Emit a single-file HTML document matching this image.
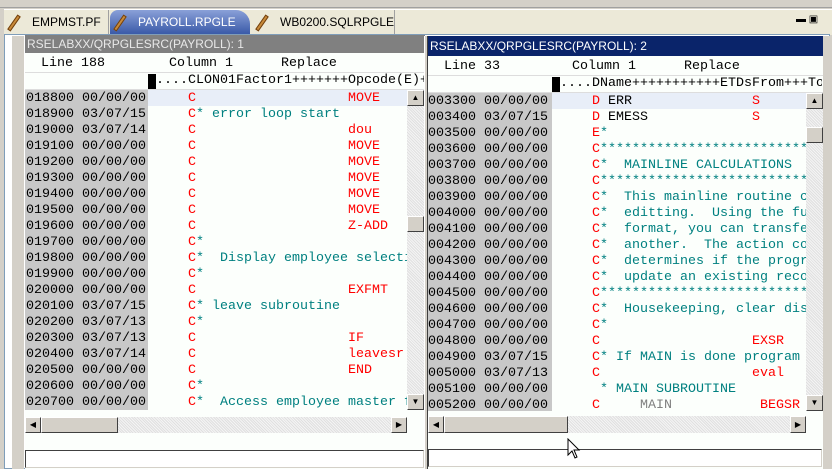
<!DOCTYPE html>
<html><head><meta charset="utf-8"><style>
*{margin:0;padding:0;box-sizing:border-box}
body{width:832px;height:469px;overflow:hidden;background:#d4d0c8;position:relative;font-family:"Liberation Sans",sans-serif}
.a{position:absolute}
.m{font-family:"Liberation Mono",monospace;font-size:13.33px;line-height:16px;white-space:pre}
.r{color:#f00}.t{color:#008080}.g{color:#808080}.k{color:#000}
.tab{position:absolute;top:10px;height:24px;font-size:12px;line-height:24px;color:#000;padding-left:28px}
.pen{position:absolute;left:8px;top:4px;width:4px;height:18px;background:#c88a3a;transform:rotate(35deg);border:1px solid #704010}
.hs{background:repeating-linear-gradient(45deg,#e0e0e0 0 1px,#f4f4f4 1px 2px)}
.btn{position:absolute;background:#d4d0c8;border:1px solid;border-color:#fff #404040 #404040 #fff}
</style></head><body>
<div class="a" style="left:0;top:0;width:832px;height:8px;background:#d4d0c8;border-bottom:1px solid #a0a0a0"></div>
<div class="a" style="left:4px;top:9px;width:828px;height:26px;background:#ece9d8;border-top:1px solid #fff"></div>
<div class="tab" style="left:4px;width:105px;border-right:1px solid #a0a0a0"><span class="pen"></span>EMPMST.PF</div>
<div class="tab" style="left:110px;width:140px;background:linear-gradient(#8aa0d8,#3a5aa8);color:#fff;border-radius:8px 14px 0 0"><span class="pen"></span>PAYROLL.RPGLE <b style="margin-left:6px">✕</b></div>
<div class="tab" style="left:252px;width:143px;border-right:1px solid #a0a0a0"><span class="pen"></span>WB0200.SQLRPGLE</div>
<div class="a" style="left:796px;top:14px;font-size:10px">▬ ▣</div>
<div class="a" style="left:4px;top:34px;width:826px;height:435px;background:#fff;border:1px solid #7f9db9"></div>
<div class="a" style="left:12px;top:36px;width:12px;height:433px;background:#d4d0c8"></div>

<!-- LEFT PANE -->
<div class="a" style="left:25px;top:36px;width:400px;height:433px;background:#fcfffc"></div>
<div class="a" style="left:25px;top:35px;width:400px;height:18px;background:#808080;color:#e8e8e8;font-size:12px;line-height:18px;padding-left:2px">RSELABXX/QRPGLESRC(PAYROLL): 1</div>
<div class="a m k" style="left:25px;top:56px">  Line 188        Column 1      Replace</div>
<div class="a" style="left:25px;top:72px;width:400px;height:1px;background:#ddd"></div>
<div class="a" style="left:148px;top:74px;width:8px;height:15px;background:#000"></div>
<div class="a m k" style="left:148px;top:73px">.....CLON01Factor1+++++++Opcode(E)+</div>
<div class="a" style="left:25px;top:89px;width:400px;height:1px;background:#ddd"></div>
<div class="a" style="left:25px;top:90px;width:123px;height:320px;background:#c8c8c8"></div>
<div class="a" style="left:148px;top:90px;width:259px;height:16px;background:#e8eef8"></div>
<div class="a m k" style="left:26px;top:91px">018800 00/00/00
018900 03/07/15
019000 03/07/14
019100 00/00/00
019200 00/00/00
019300 00/00/00
019400 00/00/00
019500 00/00/00
019600 00/00/00
019700 00/00/00
019800 00/00/00
019900 00/00/00
020000 00/00/00
020100 03/07/15
020200 03/07/13
020300 03/07/13
020400 03/07/14
020500 00/00/00
020600 00/00/00
020700 00/00/00</div>
<div class="a m" style="left:148px;top:91px;width:259px;overflow:hidden"><span class="r">     C                   MOVE</span>
<span class="r">     C</span><span class="t">* error loop start</span>
<span class="r">     C                   dou</span>
<span class="r">     C                   MOVE</span>
<span class="r">     C                   MOVE</span>
<span class="r">     C                   MOVE</span>
<span class="r">     C                   MOVE</span>
<span class="r">     C                   MOVE</span>
<span class="r">     C                   Z-ADD</span>
<span class="r">     C</span><span class="t">*</span>
<span class="r">     C</span><span class="t">*  Display employee selection</span>
<span class="r">     C</span><span class="t">*</span>
<span class="r">     C                   EXFMT</span>
<span class="r">     C</span><span class="t">* leave subroutine</span>
<span class="r">     C</span><span class="t">*</span>
<span class="r">     C                   IF</span>
<span class="r">     C                   leavesr</span>
<span class="r">     C                   END</span>
<span class="r">     C</span><span class="t">*</span>
<span class="r">     C</span><span class="t">*  Access employee master file</span></div>
<div class="a hs" style="left:407px;top:90px;width:17px;height:320px"></div>
<div class="btn" style="left:407px;top:90px;width:17px;height:16px;font-size:8px;text-align:center;line-height:14px">▲</div>
<div class="btn" style="left:407px;top:216px;width:17px;height:16px"></div>
<div class="btn" style="left:407px;top:394px;width:17px;height:16px;font-size:8px;text-align:center;line-height:14px">▼</div>
<div class="a hs" style="left:25px;top:417px;width:382px;height:16px"></div>
<div class="btn" style="left:25px;top:417px;width:16px;height:16px;font-size:8px;text-align:center;line-height:14px">◀</div>
<div class="btn" style="left:41px;top:417px;width:77px;height:16px"></div>
<div class="btn" style="left:391px;top:417px;width:16px;height:16px;font-size:8px;text-align:center;line-height:14px">▶</div>
<div class="a" style="left:25px;top:450px;width:399px;height:18px;background:#fff;border:1px solid;border-color:#404040 #d4d0c8 #d4d0c8 #404040"></div>

<div class="a" style="left:424px;top:36px;width:4px;height:433px;background:#d4d0c8;border-left:1px solid #fff;border-right:1px solid #404040"></div>

<!-- RIGHT PANE -->
<div class="a" style="left:428px;top:36px;width:395px;height:433px;background:#fcfffc"></div>
<div class="a" style="left:428px;top:36px;width:395px;height:20px;background:#0a246a;color:#fff;font-size:12px;line-height:20px;padding-left:2px">RSELABXX/QRPGLESRC(PAYROLL): 2</div>
<div class="a m k" style="left:428px;top:59px">  Line 33         Column 1      Replace</div>
<div class="a" style="left:428px;top:75px;width:395px;height:1px;background:#ddd"></div>
<div class="a" style="left:552px;top:77px;width:8px;height:15px;background:#000"></div>
<div class="a m k" style="left:552px;top:76px;width:270px;overflow:hidden">.....DName+++++++++++ETDsFrom+++To/</div>
<div class="a" style="left:428px;top:92px;width:395px;height:1px;background:#ddd"></div>
<div class="a" style="left:428px;top:93px;width:124px;height:318px;background:#c8c8c8"></div>
<div class="a" style="left:552px;top:93px;width:254px;height:16px;background:#e8eef8"></div>
<div class="a m k" style="left:428px;top:94px">003300 00/00/00
003400 03/07/15
003500 00/00/00
003600 00/00/00
003700 00/00/00
003800 00/00/00
003900 00/00/00
004000 00/00/00
004100 00/00/00
004200 00/00/00
004300 00/00/00
004400 00/00/00
004500 00/00/00
004600 00/00/00
004700 00/00/00
004800 00/00/00
004900 03/07/15
005000 03/07/13
005100 00/00/00
005200 00/00/00</div>
<div class="a m" style="left:552px;top:94px;width:254px;height:317px;overflow:hidden"><span class="r">     D</span><span class="k"> ERR</span><span class="r">               S</span>
<span class="r">     D</span><span class="k"> EMESS</span><span class="r">             S</span>
<span class="r">     E</span><span class="t">*</span>
<span class="r">     C</span><span class="t">****************************</span>
<span class="r">     C</span><span class="t">*  MAINLINE CALCULATIONS</span>
<span class="r">     C</span><span class="t">****************************</span>
<span class="r">     C</span><span class="t">*  This mainline routine co</span>
<span class="r">     C</span><span class="t">*  editting.  Using the fun</span>
<span class="r">     C</span><span class="t">*  format, you can transfer</span>
<span class="r">     C</span><span class="t">*  another.  The action cod</span>
<span class="r">     C</span><span class="t">*  determines if the progra</span>
<span class="r">     C</span><span class="t">*  update an existing recor</span>
<span class="r">     C</span><span class="t">****************************</span>
<span class="r">     C</span><span class="t">*  Housekeeping, clear disp</span>
<span class="r">     C</span><span class="t">*</span>
<span class="r">     C                   EXSR</span>
<span class="r">     C</span><span class="t">* If MAIN is done program e</span>
<span class="r">     C                   eval</span>
<span class="t">      * MAIN SUBROUTINE</span>
<span class="r">     C</span><span class="g">     MAIN</span><span class="r">           BEGSR</span></div>
<div class="a hs" style="left:806px;top:93px;width:17px;height:318px"></div>
<div class="btn" style="left:806px;top:93px;width:17px;height:16px;font-size:8px;text-align:center;line-height:14px">▲</div>
<div class="btn" style="left:806px;top:127px;width:17px;height:16px"></div>
<div class="btn" style="left:806px;top:395px;width:17px;height:16px;font-size:8px;text-align:center;line-height:14px">▼</div>
<div class="a hs" style="left:428px;top:416px;width:378px;height:17px"></div>
<div class="btn" style="left:428px;top:416px;width:16px;height:17px;font-size:8px;text-align:center;line-height:15px">◀</div>
<div class="btn" style="left:444px;top:416px;width:124px;height:17px"></div>
<div class="btn" style="left:790px;top:416px;width:16px;height:17px;font-size:8px;text-align:center;line-height:15px">▶</div>
<div class="a" style="left:428px;top:449px;width:394px;height:18px;background:#fff;border:1px solid;border-color:#404040 #d4d0c8 #d4d0c8 #404040"></div>
<div class="a" style="left:823px;top:36px;width:7px;height:433px;background:#d4d0c8"></div>
<svg class="a" style="left:567px;top:438px" width="14" height="22"><path d="M1 1 L1 17 L5 13 L8 20 L10 19 L7 12 L12 12 Z" fill="#fff" stroke="#000"/></svg>
</body></html>
